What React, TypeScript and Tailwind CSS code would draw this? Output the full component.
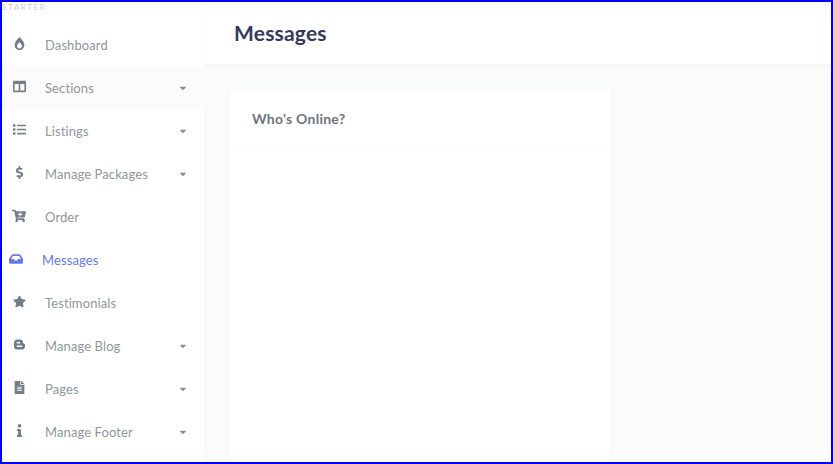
import { FaBurn, FaColumns, FaList, FaDollarSign, FaCartPlus, FaInbox, FaStar, FaFileAlt, FaInfo, FaCaretDown } from 'react-icons/fa'

// blogger blob, the package one is too square at this size
function BlogIcon({ size }: { size: number }) {
  return (
    <svg width={size} height={size} viewBox="0 0 14 14">
      <path
        fill="currentColor"
        fillRule="evenodd"
        d="M4.5 1.5H8C9.6 1.5 10.6 2.6 10.7 4.2 10.7 5.2 11 5.7 11.8 5.9 12.6 6.1 13 6.7 13 7.6V8.8C13 11 11.4 12.5 9.3 12.5H4.7C2.6 12.5 1 11 1 8.8V5C1 3 2.5 1.5 4.5 1.5ZM4.6 4.2C4.1 4.2 3.9 4.5 3.9 5 3.9 5.5 4.1 5.8 4.6 5.8H7C7.5 5.8 7.7 5.5 7.7 5 7.7 4.5 7.5 4.2 7 4.2ZM4.6 8.2C4.1 8.2 3.9 8.5 3.9 9 3.9 9.5 4.1 9.8 4.6 9.8H9.4C9.9 9.8 10.1 9.5 10.1 9 10.1 8.5 9.9 8.2 9.4 8.2Z"
      />
    </svg>
  )
}

const navItems = [
  { name: 'Dashboard', icon: FaBurn, size: 13 },
  { name: 'Sections', icon: FaColumns, size: 13, caret: true, hover: true },
  { name: 'Listings', icon: FaList, size: 13, caret: true },
  { name: 'Manage Packages', icon: FaDollarSign, size: 13, caret: true },
  { name: 'Order', icon: FaCartPlus, size: 14 },
  { name: 'Messages', icon: FaInbox, size: 14, active: true },
  { name: 'Testimonials', icon: FaStar, size: 13 },
  { name: 'Manage Blog', icon: BlogIcon, size: 13, caret: true },
  { name: 'Pages', icon: FaFileAlt, size: 13, caret: true },
  { name: 'Manage Footer', icon: FaInfo, size: 13, caret: true },
]

export default function App() {
  return (
    <div className="flex h-screen w-full overflow-hidden border-2 border-[#0000ff] bg-[#fafbfb] font-['Lato','Noto_Sans',sans-serif]">
      {/* Sidebar */}
      <aside className="relative z-10 w-[202px] flex-shrink-0 overflow-hidden bg-white shadow-[0_0_5px_rgba(0,0,0,0.04)]">
        <div className="h-[21px] text-[8px] leading-[11px] tracking-[1.6px] text-[#c9ccd1]">STARTER</div>
        <nav>
          {navItems.map((item) => {
            const Icon = item.icon
            return (
              <div
                key={item.name}
                className={`flex h-[43px] items-center text-[13px] tracking-[0.1px] ${
                  item.active ? 'pl-[5px] text-[#6777ef]' : 'pl-2 text-[#8f969d]'
                } ${item.hover ? 'bg-[#fbfbfb]' : ''}`}
              >
                <span className={`flex w-[18px] justify-center pb-[2px] ${item.active ? 'text-[#6777ef]' : 'text-[#757e87]'}`}>
                  <Icon size={item.size} />
                </span>
                <span className="ml-[17px] flex-1 pt-[2px]">{item.name}</span>
                {item.caret && <FaCaretDown size={10} className="mr-[16px] text-[#868e96]" />}
              </div>
            )
          })}
        </nav>
      </aside>

      {/* Main */}
      <main className="flex min-w-0 flex-1 flex-col">
        <header className="flex h-[62px] flex-shrink-0 items-center bg-white pl-[30px] shadow-[0_2px_5px_rgba(0,0,0,0.03)]">
          <h1 className="text-[21px] font-bold tracking-[0.2px] text-[#34395e]">Messages</h1>
        </header>
        <div className="flex-1 pl-[26px] pt-[26px]">
          <div className="h-full w-[380px] bg-white shadow-[0_2px_6px_rgba(0,0,0,0.02)]">
            <div className="flex h-[60px] items-center border-b border-[#f9f9f9] pb-[2px] pl-[22px]">
              <h4 className="text-[14px] font-bold tracking-[0.25px] text-[#6c757d]">Who's Online?</h4>
            </div>
          </div>
        </div>
      </main>
    </div>
  )
}
